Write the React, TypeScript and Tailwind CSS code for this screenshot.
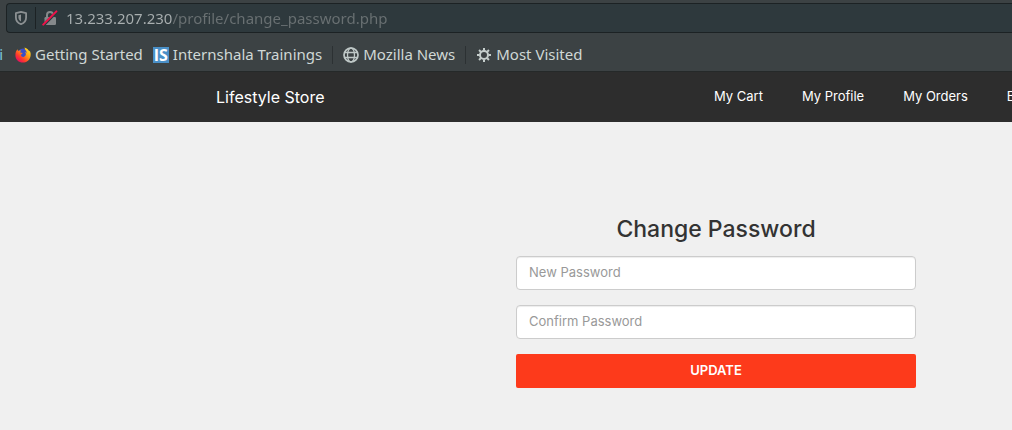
import type { ReactNode } from "react";

function ShieldIcon() {
  return (
    <svg viewBox="0 0 16 16" className="size-4 shrink-0" fill="none" aria-hidden="true">
      <path
        d="M8 1.9 13.1 3.2v4.2c0 3.3-2 5.6-5.1 6.8-3.1-1.2-5.1-3.5-5.1-6.8V3.2z"
        stroke="#8b9092"
        strokeWidth="1.8"
        strokeLinejoin="round"
      />
      <path d="M8 4.6v6.9C6.300 10.600 5.400 9.200 5.400 7.300V5.200z" fill="#8b9092" />
    </svg>
  );
}

function InsecureLockIcon() {
  return (
    <svg viewBox="0 0 16 16" className="size-4 shrink-0" fill="none" aria-hidden="true">
      <path d="M5 8V5a3 3 0 0 1 6 0v3" stroke="#85898b" strokeWidth="2" />
      <rect x="2.500" y="7" width="11.500" height="8" rx="1.200" fill="#85898b" />
      <path d="M0.800 15.800 14.800 1.800" stroke="#2e393d" strokeWidth="3" />
      <path d="M1.200 14.600 14.400 1.400" stroke="#f2114a" strokeWidth="2" strokeLinecap="round" />
    </svg>
  );
}

function FirefoxIcon() {
  return (
    <svg viewBox="0 0 16 16" className="size-4 shrink-0" aria-hidden="true">
      <defs>
        <linearGradient id="flame" x1="0.9" y1="0.1" x2="0.2" y2="0.9">
          <stop offset="0" stopColor="#ffe226" />
          <stop offset="0.4" stopColor="#ff9a16" />
          <stop offset="0.75" stopColor="#ff3a2c" />
          <stop offset="1" stopColor="#e8125c" />
        </linearGradient>
      </defs>
      <circle cx="8.200" cy="7.600" r="6" fill="#3b4fc8" />
      <path
        d="M2.400 2.300c.2.800.5 1.300.9 1.600 1-.5 2-.5 3-.1-.8.400-1.200 1-1.200 1.600l2.500.5c-.1.900-1.400 1.200-1.600 1.900-.2 1.500 1.400 2.500 3.100 1.900 2.100-.7 2.300-3 .9-4.600 1 .1 1.600.6 1.900 1.200C11.900 3.600 9.700 3 9.500.4c2.600 1 4.300 2.500 4.900 4.200l.2-1c1.100 1.800 1.400 4 .8 6.100-1 3.500-4 5.900-7.500 5.900C3.700 15.600.4 12.300.4 8.200c0-2.500.8-4.500 2-5.900z"
        fill="url(#flame)"
      />
    </svg>
  );
}

function InternshalaIcon() {
  return (
    <span className="flex size-4 shrink-0 items-center justify-center bg-[#4a90c8] font-['Open_Sans',sans-serif] text-base leading-4 font-bold text-white" aria-hidden="true">
      IS
    </span>
  );
}

function GlobeIcon() {
  return (
    <svg viewBox="0 0 16 16" className="size-4 shrink-0" fill="none" stroke="#bfc8c7" aria-hidden="true">
      <circle cx="8" cy="8" r="7" strokeWidth="1.700" />
      <ellipse cx="8" cy="8" rx="3.500" ry="7" strokeWidth="1.300" />
      <path d="M1.500 5.500h13M1.500 10.500h13" strokeWidth="1.300" />
    </svg>
  );
}

function GearIcon() {
  return (
    <svg viewBox="0 0 16 16" className="size-4 shrink-0" fill="none" stroke="#c5cecc" aria-hidden="true">
      <circle cx="8" cy="8" r="4" strokeWidth="2" />
      <path
        d="M8 1v2.500M8 12.500V15M1 8h2.500M12.500 8H15M3.050 3.050l1.800 1.800M11.150 11.150l1.800 1.800M3.050 12.950l1.800-1.800M11.150 4.850l1.800-1.800"
        strokeWidth="2"
      />
    </svg>
  );
}

function Bookmark({ icon, label }: { icon: ReactNode; label: string }) {
  return (
    <a href="#" className="flex shrink-0 items-center gap-1 whitespace-nowrap">
      {icon}
      <span className="pb-0.5">{label}</span>
    </a>
  );
}

function Divider() {
  return <span className="h-[18px] w-px shrink-0 bg-[#2c3133]" />;
}

function BrowserChrome() {
  return (
    <div className="overflow-hidden border-b border-[#252929] bg-[#3c4244] font-['Noto_Sans',sans-serif]">
      <div className="pt-[3px] pl-1.5">
        <div className="flex h-[30px] items-center rounded-l border border-r-0 border-[#1c2224] bg-[#2e393d] pl-1.5">
          <ShieldIcon />
          <span className="ml-1.5 h-[22px] w-px bg-[#1c2224]" />
          <span className="ml-1.5 flex">
            <InsecureLockIcon />
          </span>
          <input
            type="text"
            aria-label="Address"
            defaultValue="13.233.207.230/profile/change_password.php"
            className="ml-2 min-w-0 flex-1 bg-[linear-gradient(to_right,#a9afb0_106px,#697072_106px)] bg-clip-text text-[15px] leading-6 text-transparent outline-none"
          />
        </div>
      </div>
      <nav aria-label="Bookmarks" className="flex h-[38px] items-center pt-[6px] text-[15px] leading-5 text-[#d0d8d6]">
        <a href="#" className="mr-3 flex w-[3px] shrink-0 justify-end overflow-hidden pb-0.5 text-[#7cc8da]">
          i
        </a>
        <div className="flex items-center gap-2.5">
          <Bookmark icon={<FirefoxIcon />} label="Getting Started" />
          <Bookmark icon={<InternshalaIcon />} label="Internshala Trainings" />
          <Divider />
          <Bookmark icon={<GlobeIcon />} label="Mozilla News" />
          <Divider />
          <Bookmark icon={<GearIcon />} label="Most Visited" />
        </div>
      </nav>
    </div>
  );
}

function StoreHeader() {
  return (
    <header className="flex h-[50px] items-center overflow-hidden bg-[#2d2d2d] whitespace-nowrap text-white">
      <a href="#" className="ml-[216px] w-[498px] shrink-0 text-base leading-6">
        Lifestyle Store
      </a>
      <nav aria-label="Store" className="flex shrink-0 gap-[39px] pb-0.5 text-[13px] leading-5">
        <a href="#">My Cart</a>
        <a href="#">My Profile</a>
        <a href="#">My Orders</a>
        <a href="#">Blog</a>
      </nav>
    </header>
  );
}

function PasswordField({ label }: { label: string }) {
  return (
    <input
      type="password"
      aria-label={label}
      placeholder={label}
      className="h-[34px] w-full rounded border border-[#cccccc] bg-white px-3 pb-0.5 text-[13px] text-[#555555] shadow-[inset_0_1px_1px_rgba(0,0,0,0.075)] placeholder:text-[#999999]"
    />
  );
}

export default function App() {
  return (
    <div className="flex min-h-screen flex-col overflow-hidden bg-[#f0f0f0] font-[Inter,sans-serif]">
      <BrowserChrome />
      <StoreHeader />
      <main className="flex justify-end px-24 pt-[93px] pb-10">
        <form className="flex w-full max-w-[400px] flex-col" onSubmit={(e) => e.preventDefault()}>
          <h1 className="mb-[13px] text-center text-[23px] leading-7 font-medium text-[#333333]">Change Password</h1>
          <div className="flex flex-col gap-[15px]">
            <PasswordField label="New Password" />
            <PasswordField label="Confirm Password" />
            <button type="submit" className="h-[34px] rounded-xs bg-[#fd3a1b] text-[13px] font-semibold text-white">
              UPDATE
            </button>
          </div>
        </form>
      </main>
    </div>
  );
}
